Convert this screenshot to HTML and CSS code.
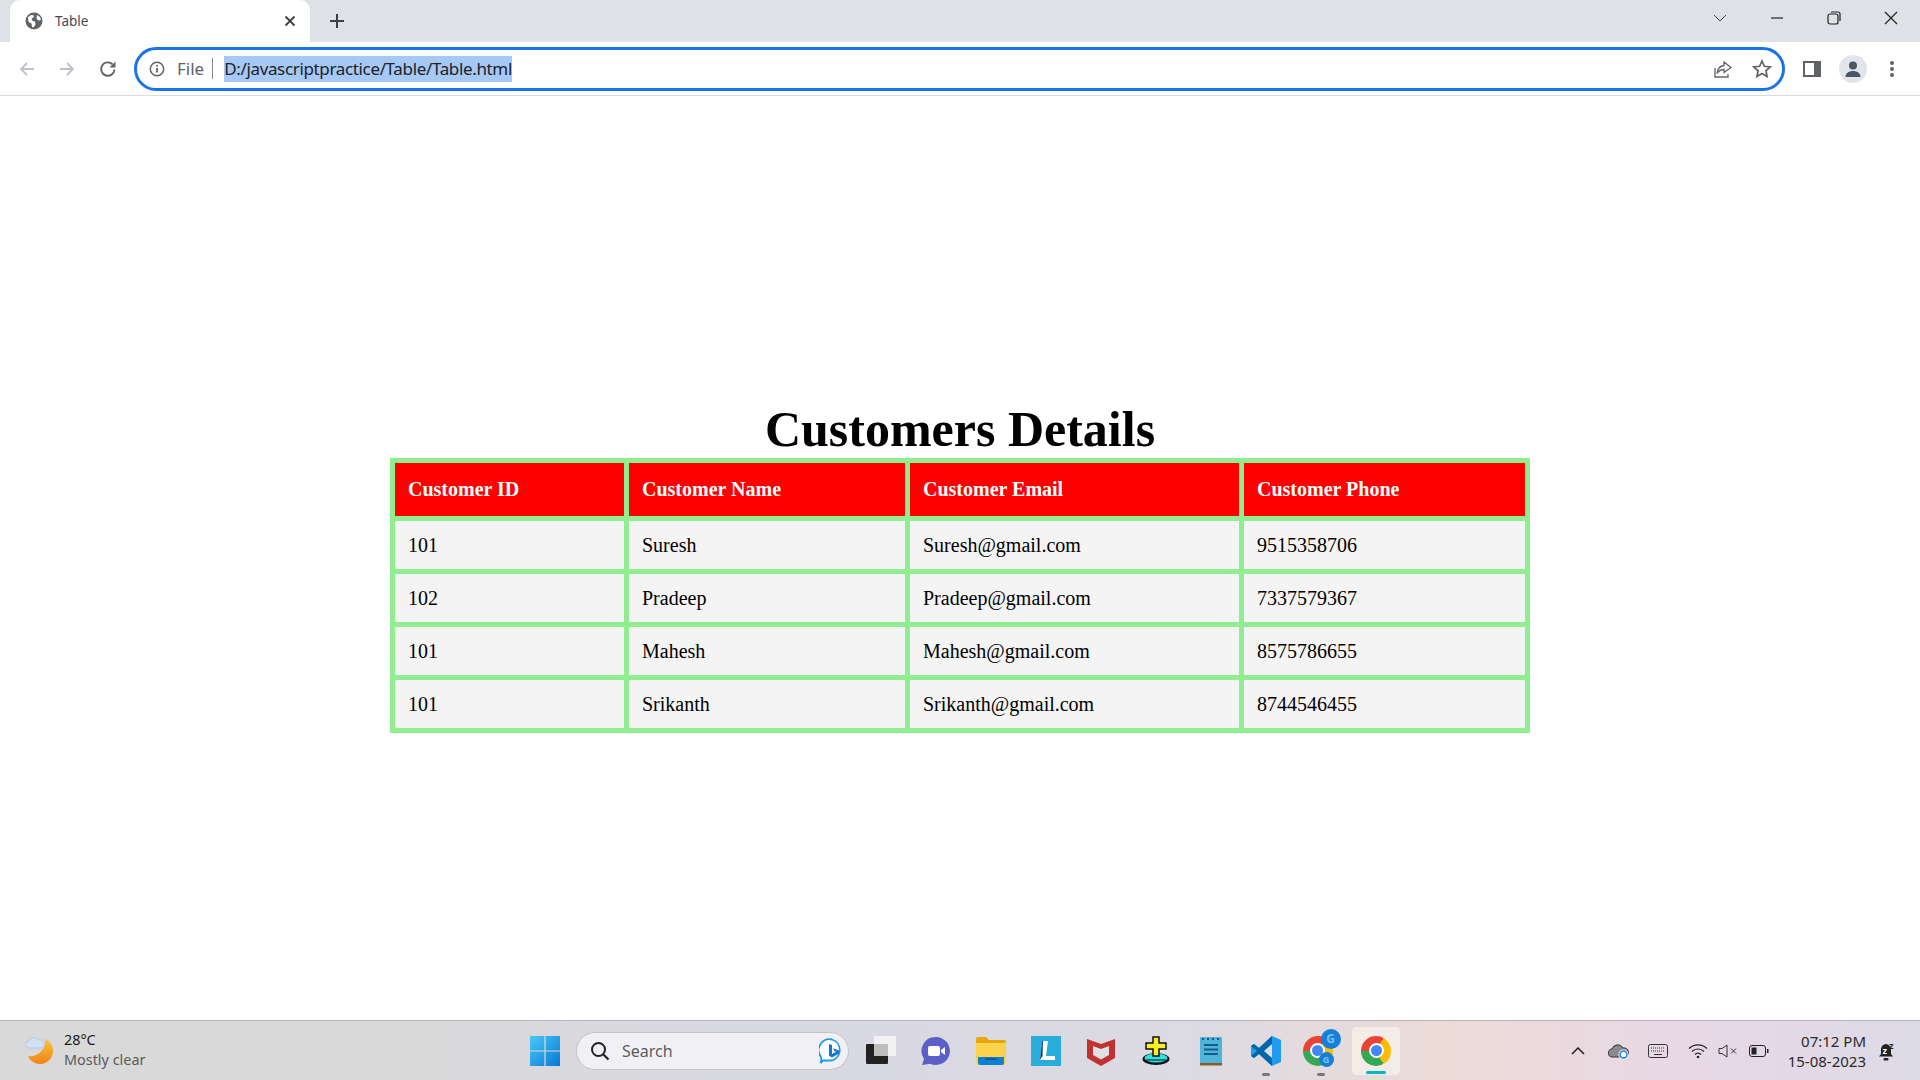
FILE: index.html

```html
<!DOCTYPE html>
<html lang="en">
<head>
  <meta charset="UTF-8">
  <title>Table</title>
  <link rel="stylesheet" href="styles.css">
</head>
<body>
  <div class="tabstrip">
    <div class="tab">
      <svg class="tab-globe" width="18" height="18" viewBox="0 0 18 18"><circle cx="9" cy="9" r="8.5" fill="#5f6368"/><path d="M3 5l3-2 3 .5-.5 2-2 1 1 2.5 2.5.5.5 3-2 3-1.500-.5-.5-3.500-3-1.500zM12 3l3 2 1 3-3 .5-1.500-2.500z" fill="#fff"/></svg>
      <span class="tab-title">Table</span>
      <svg class="tab-close" width="12" height="12" viewBox="0 0 12 12"><path d="M1.500 1.500l9 9M10.500 1.500l-9 9" stroke="#3c4043" stroke-width="1.800"/></svg>
    </div>
    <svg class="new-tab" width="16" height="16" viewBox="0 0 16 16"><path d="M8 1v14M1 8h14" stroke="#3c4043" stroke-width="2"/></svg>
    <div class="window-btns">
      <svg width="14" height="14" viewBox="0 0 14 14"><path d="M1 4l6 6 6-6" fill="none" stroke="#3c4043"/></svg>
      <svg width="14" height="14" viewBox="0 0 14 14"><path d="M1 7h12" stroke="#222" stroke-width="1.200"/></svg>
      <svg width="14" height="14" viewBox="0 0 14 14"><rect x="1" y="3" width="10" height="10" rx="2" fill="none" stroke="#222" stroke-width="1.200"/><path d="M4 1h7a2 2 0 0 1 2 2v7" fill="none" stroke="#222" stroke-width="1.200"/></svg>
      <svg width="14" height="14" viewBox="0 0 14 14"><path d="M1 1l12 12M13 1L1 13" stroke="#222" stroke-width="1.200"/></svg>
    </div>
  </div>

  <div class="toolbar">
    <svg class="nav-icon" width="18" height="18" viewBox="0 0 18 18"><path d="M16 9H3M9 3L3 9l6 6" fill="none" stroke="#bdc1c6" stroke-width="1.800"/></svg>
    <svg class="nav-icon" width="18" height="18" viewBox="0 0 18 18"><path d="M2 9h13M9 3l6 6-6 6" fill="none" stroke="#bdc1c6" stroke-width="1.800"/></svg>
    <svg class="nav-icon" width="18" height="18" viewBox="0 0 18 18"><path d="M15.500 9.500A6.700 6.700 0 1 1 13.600 4.400" fill="none" stroke="#5f6368" stroke-width="1.900"/><path d="M16.500 1.500v6h-6z" fill="#5f6368"/></svg>
    <div class="omnibox">
      <svg class="info-icon" width="16" height="16" viewBox="0 0 16 16"><circle cx="8" cy="8" r="6.700" fill="none" stroke="#5f6368" stroke-width="1.500"/><path d="M8 7v4.500" stroke="#5f6368" stroke-width="1.800"/><circle cx="8" cy="4.800" r="1" fill="#5f6368"/></svg>
      <span class="scheme">File</span>
      <span class="divider"></span>
      <span class="url">D:/javascriptpractice/Table/Table.html</span>
      <svg class="share-icon" width="20" height="20" viewBox="0 0 20 20"><path d="M2 9v9h13v-3" fill="none" stroke="#5f6368" stroke-width="1.300"/><path d="M11 3l7 5.500-7 5v-3c-3 0-5 1-7 4 .5-4.500 3-7.500 7-8z" fill="none" stroke="#5f6368" stroke-width="1.300"/></svg>
      <svg class="star-icon" width="20" height="20" viewBox="0 0 20 20"><path d="M10 2l2.400 5.300 5.800.6-4.300 3.900 1.200 5.700L10 14.600l-5.100 2.900 1.200-5.700L1.800 7.900l5.800-.6z" fill="none" stroke="#5f6368" stroke-width="1.700"/></svg>
    </div>
    <svg class="panel-icon" width="18" height="16" viewBox="0 0 18 16"><path d="M0 0h18v16H0zM2 2v12h9V2z" fill="#5f6368" fill-rule="evenodd"/></svg>
    <div class="avatar">
      <svg width="18" height="18" viewBox="0 0 18 18"><circle cx="9" cy="5.500" r="4" fill="#4a5568"/><path d="M1.500 17c0-4 3.500-6 7.500-6s7.500 2 7.500 6z" fill="#4a5568"/></svg>
    </div>
    <svg class="menu-icon" width="6" height="18" viewBox="0 0 6 18"><circle cx="3" cy="3" r="2" fill="#5f6368"/><circle cx="3" cy="9" r="2" fill="#5f6368"/><circle cx="3" cy="15" r="2" fill="#5f6368"/></svg>
  </div>

  <main class="page">
    <h1>Customers Details</h1>
    <table class="customers">
      <colgroup>
        <col class="col-id"><col class="col-name"><col class="col-email"><col class="col-phone">
      </colgroup>
      <thead>
        <tr><th>Customer ID</th><th>Customer Name</th><th>Customer Email</th><th>Customer Phone</th></tr>
      </thead>
      <tbody>
        <tr><td>101</td><td>Suresh</td><td>Suresh@gmail.com</td><td>9515358706</td></tr>
        <tr><td>102</td><td>Pradeep</td><td>Pradeep@gmail.com</td><td>7337579367</td></tr>
        <tr><td>101</td><td>Mahesh</td><td>Mahesh@gmail.com</td><td>8575786655</td></tr>
        <tr><td>101</td><td>Srikanth</td><td>Srikanth@gmail.com</td><td>8744546455</td></tr>
      </tbody>
    </table>
  </main>

  <footer class="taskbar">
    <div class="weather">
      <svg width="30" height="30" viewBox="0 0 30 30">
        <defs><linearGradient id="moon" x1="0" y1="0" x2="0" y2="1"><stop offset="0" stop-color="#f8c33a"/><stop offset="1" stop-color="#f08418"/></linearGradient></defs>
        <path d="M20 4A13 13 0 1 1 3 21A15 15 0 0 0 20 4z" fill="url(#moon)"/>
        <path d="M4 13a3.500 3.500 0 0 1 0-7A6 6 0 0 1 14 5a4 4 0 0 1 2 8z" fill="#d4e0f6" stroke="#b7c9ea"/>
      </svg>
      <div class="weather-text">
        <div class="temp">28°C</div>
        <div class="cond">Mostly clear</div>
      </div>
    </div>

    <div class="slot">
      <svg width="30" height="30" viewBox="0 0 30 30">
        <defs><linearGradient id="win" x1="0" y1="0" x2="1" y2="1"><stop offset="0" stop-color="#4cc8f8"/><stop offset="1" stop-color="#0578d4"/></linearGradient></defs>
        <path d="M0 0h14.400v14.400H0zM15.600 0H30v14.400H15.600zM0 15.600h14.400V30H0zM15.600 15.600H30V30H15.600z" fill="url(#win)"/>
      </svg>
    </div>

    <div class="searchbox">
      <svg width="20" height="20" viewBox="0 0 20 20"><circle cx="8.500" cy="8.500" r="6.500" fill="none" stroke="#222" stroke-width="2"/><path d="M13.500 13.500l5 5" stroke="#222" stroke-width="2.200"/></svg>
      <span class="search-label">Search</span>
      <svg class="bing" width="26" height="26" viewBox="0 0 26 26">
        <path d="M13 1.500a11 11 0 0 1 0 21H4l-2.500 2.500c1-2 1-3 .5-6A11 11 0 0 1 13 1.500z" fill="#fff" stroke="#1c9be6" stroke-width="1.800"/>
        <path d="M10 6l3 1v9l4-2.300-2-1-1-2.500 6 2.300v3l-7 4-3-1.700z" fill="#1673d6"/>
      </svg>
    </div>

    <div class="slot">
      <svg width="30" height="30" viewBox="0 0 30 30"><rect x="8" y="0" width="22" height="20" rx="1" fill="#f2f2f4"/><rect x="0" y="8" width="22" height="20" rx="1" fill="#222"/><rect x="8" y="8" width="14" height="12" fill="#bdbdbd"/></svg>
    </div>
    <div class="slot">
      <svg width="30" height="30" viewBox="0 0 30 30"><path d="M15 1a14 14 0 1 1-6 26.700L1 29l2-6A14 14 0 0 1 15 1z" fill="#5b5fc7"/><rect x="7" y="10" width="12" height="10" rx="2" fill="#fff"/><path d="M20 14l4-3v8l-4-3z" fill="#fff"/></svg>
    </div>
    <div class="slot">
      <svg width="30" height="28" viewBox="0 0 30 28"><path d="M0 2a2 2 0 0 1 2-2h8l3 3h15a2 2 0 0 1 2 2v3H0z" fill="#e8a70c"/><path d="M0 6h30v20a2 2 0 0 1-2 2H2a2 2 0 0 1-2-2z" fill="#fbd249"/><path d="M2 20h26v6a2 2 0 0 1-2 2H4a2 2 0 0 1-2-2z" fill="#0f7fd0"/><rect x="9" y="21" width="12" height="2" rx="1" fill="#0a5fa8"/></svg>
    </div>
    <div class="slot">
      <svg width="30" height="30" viewBox="0 0 30 30"><rect width="30" height="30" fill="#29aedb"/><path d="M9 24L11 5h6l-2 15h9v4z" fill="#fff"/><path d="M9 24L11 5l1 0-.5 15z" fill="#123a8a"/></svg>
    </div>
    <div class="slot">
      <svg width="28" height="30" viewBox="0 0 28 30"><path d="M0 3l14 5 14-5v19l-14 8-14-8z" fill="#c0312f"/><path d="M6 10l8 3 8-3v9l-8 4.500L6 19z" fill="#e0dfe6"/></svg>
    </div>
    <div class="slot">
      <svg width="30" height="30" viewBox="0 0 30 30"><ellipse cx="15" cy="23" rx="13.500" ry="6" fill="#111"/><ellipse cx="15" cy="22" rx="11.500" ry="4.500" fill="#2de0e0"/><path d="M5 24h20" stroke="#111"/><path d="M12 1h6v6h7v6h-7v7h-6v-7H5V7h7z" fill="#f8f020" stroke="#111" stroke-width="1.500"/></svg>
    </div>
    <div class="slot">
      <svg width="22" height="30" viewBox="0 0 22 30"><rect y="1" width="22" height="27" rx="1" fill="#4fb4d8"/><rect y="27" width="22" height="2.500" fill="#8a5a2b"/><path d="M4 9h14M4 13.500h14M4 18h14" stroke="#0e5f88" stroke-width="1.800"/><path d="M3 2v2M8 2v2M13 2v2M18 2v2" stroke="#0e5f88" stroke-width="2"/></svg>
    </div>
    <div class="slot running">
      <svg width="30" height="30" viewBox="0 0 30 30"><path d="M21 0l9 4v22l-9 4L8 18l-5 4-3-2V10l3-2 5 4z" fill="#1f9cf0"/><path d="M21 0v30L8 18l-5 4-3-2 6-5-6-5 3-2 5 4z" fill="#0065a9"/><path d="M21 8v14l-8-7z" fill="#dcdce6"/></svg>
    </div>
    <div class="slot running">
      <div class="chrome-wrap">
        <div class="chrome-logo"><span class="chrome-core"></span></div>
        <span class="g-badge g-big">G</span>
        <span class="g-badge g-small">G</span>
      </div>
    </div>
    <div class="slot active">
      <div class="chrome-logo"><span class="chrome-core"></span></div>
    </div>

    <div class="tray">
      <svg class="tray-chevron" width="14" height="8" viewBox="0 0 14 8"><path d="M1 7l6-6 6 6" fill="none" stroke="#222" stroke-width="1.500"/></svg>
      <svg class="tray-cloud" width="22" height="18" viewBox="0 0 22 18"><path d="M5 15a4 4 0 0 1-1-8 6 6 0 0 1 11-1 4.500 4.500 0 0 1 2 9z" fill="#8a8a8e" stroke="#333"/><circle cx="15.500" cy="12.500" r="5" fill="#fff"/><circle cx="15.500" cy="12.500" r="3.500" fill="none" stroke="#1a7fd8" stroke-width="1.500"/></svg>
      <svg class="tray-keys" width="20" height="14" viewBox="0 0 20 14"><rect x=".5" y=".5" width="19" height="13" rx="2" fill="none" stroke="#333"/><path d="M3 4h14M3 7h14" stroke="#333" stroke-dasharray="1 1"/><path d="M6 10.500h8" stroke="#333"/></svg>
      <svg class="tray-wifi" width="20" height="16" viewBox="0 0 20 16"><path d="M1 5.500a13 13 0 0 1 18 0M4 8.500a8.500 8.500 0 0 1 12 0M7 11.500a4 4 0 0 1 6 0" fill="none" stroke="#222" stroke-width="1.200"/><circle cx="10" cy="14" r="1.300" fill="#222"/></svg>
      <svg class="tray-sound" width="20" height="14" viewBox="0 0 20 14"><path d="M1 4.500h3L9 1v12L4 9.500H1z" fill="none" stroke="#333"/><path d="M13 4.500l5 5M18 4.500l-5 5" stroke="#333"/></svg>
      <svg class="tray-battery" width="20" height="12" viewBox="0 0 20 12"><rect x=".5" y=".5" width="16" height="11" rx="2.500" fill="none" stroke="#222"/><rect x="2.500" y="2.500" width="5" height="7" fill="#222"/><path d="M18 4h1.500v4H18z" fill="#222"/></svg>
      <div class="clock">
        <div>07:12 PM</div>
        <div>15-08-2023</div>
      </div>
      <svg class="tray-bell" width="18" height="22" viewBox="0 0 18 22"><path d="M8 4C4.500 4.500 3 7 3 10v4l-2 2.500h14L13 14v-4c0-3-2-5.500-5-6z" fill="#222"/><rect x="5.500" y="18" width="5" height="2.500" rx="1" fill="#222"/><text class="bell-small" x="4.500" y="14">z</text><text class="bell-big" x="11" y="9">z</text></svg>
    </div>
  </footer>
</body>
</html>
```

FILE: styles.css

```css
* {
  box-sizing: border-box;
}
html, body {
  height: 100%;
}
body {
  margin: 0;
  display: flex;
  flex-direction: column;
  height: 1080px;
  overflow: hidden;
  background: #fff;
  font-family: "Noto Sans", "Open Sans", sans-serif;
}
svg {
  display: block;
  flex-shrink: 0;
}

/* browser tabs */
.tabstrip {
  height: 42px;
  background: #dee1e6;
  display: flex;
  align-items: flex-end;
  padding-left: 10px;
}
.tab {
  width: 300px;
  height: 42px;
  background: #fff;
  border-radius: 10px 10px 0 0;
  display: flex;
  align-items: center;
  padding: 0 14px 0 15px;
}
.tab-title {
  margin-left: 12px;
  font-size: 13.500px;
  color: #45494e;
  flex: 1;
}
.new-tab {
  margin: 0 0 13px 19px;
}
.window-btns {
  margin-left: auto;
  align-self: stretch;
  display: flex;
  align-items: center;
  gap: 43px;
  padding: 0 22px 6px 0;
}

/* address bar */
.toolbar {
  height: 54px;
  background: #fff;
  border-bottom: 1px solid #dadce0;
  display: flex;
  align-items: center;
  padding: 0 25px 0 18px;
}
.nav-icon {
  margin-right: 22px;
}
.nav-icon:nth-child(2) {
  margin-right: 23px;
}
.nav-icon:nth-child(3) {
  margin-right: 17px;
}
.omnibox {
  width: 1651px;
  height: 44px;
  border: 3px solid #1a73e8;
  border-radius: 22px;
  display: flex;
  align-items: center;
  padding: 0 10px 0 12px;
  font-size: 17px;
}
.scheme {
  margin-left: 12px;
  color: #5f6368;
}
.divider {
  width: 1px;
  height: 21px;
  background: #80868b;
  margin: 0 11px 0 8px;
}
.url {
  background: #a5c8f5;
  color: #202124;
  line-height: 26px;
  letter-spacing: -0.350px;
}
.share-icon {
  margin-left: auto;
}
.star-icon {
  margin-left: 19px;
}
.panel-icon {
  margin-left: 18px;
}
.avatar {
  width: 28px;
  height: 28px;
  border-radius: 50%;
  background: #e2e4e9;
  margin-left: 18px;
  display: flex;
  align-items: center;
  justify-content: center;
}
.menu-icon {
  margin-left: 22px;
}

/* page content */
.page {
  flex: 1;
  padding-top: 304px;
  font-family: "Liberation Serif", "Times New Roman", serif;
  color: #000;
}
h1 {
  margin: 0;
  text-align: center;
  font-size: 50px;
  line-height: 58px;
}
.customers {
  width: 1140px;
  margin: 0 auto;
  table-layout: fixed;
  border-collapse: separate;
  border-spacing: 5px;
  background: #90ee90;
  font-size: 20px;
}
.col-id { width: 229px; }
.col-name { width: 276px; }
.col-email { width: 329px; }
.col-phone { width: 281px; }
.customers th, .customers td {
  padding: 0 13px;
  text-align: left;
}
.customers th {
  height: 53px;
  background: #f00;
  color: #fff;
}
.customers td {
  height: 48px;
  background: #f4f4f4;
}

/* windows taskbar */
.taskbar {
  height: 60px;
  border-top: 1px solid #b4b4b8;
  background: linear-gradient(90deg, #d9d9d9 0%, #d9d9d9 18%, #d9d9e3 45%, #dcdae2 62%, #ecdcd8 75%, #e8d8e6 88%, #dcdae6 100%);
  display: flex;
  align-items: center;
}
.weather {
  width: 517px;
  display: flex;
  align-items: center;
  padding-left: 25px;
  gap: 9px;
  font-size: 14.400px;
  line-height: 20px;
  margin-top: -2px;
}
.temp {
  color: #1b1b1b;
}
.cond {
  color: #5a5a5a;
}
.slot {
  width: 55px;
  height: 48px;
  display: flex;
  align-items: center;
  justify-content: center;
  position: relative;
}
.running::after, .active::after {
  content: "";
  position: absolute;
  bottom: -1px;
  left: 50%;
  width: 8px;
  height: 3px;
  margin-left: -4px;
  border-radius: 2px;
  background: #77777c;
}
.active {
  background: #f5ece8;
  border-radius: 5px;
  width: 48px;
  margin-left: 4px;
}
.active::after {
  width: 20px;
  margin-left: -10px;
  bottom: 1px;
  background: #00b7c3;
}
.searchbox {
  width: 273px;
  height: 38px;
  margin: 0 4px;
  border-radius: 19px;
  border: 1px solid #c4c4c8;
  background: #f1f1f5;
  display: flex;
  align-items: center;
  padding: 0 3px 0 13px;
  font-size: 16px;
  color: #5c5c5c;
}
.search-label {
  margin-left: 12px;
}
.bing {
  margin-left: auto;
}
.chrome-logo {
  width: 30px;
  height: 30px;
  border-radius: 50%;
  background: conic-gradient(from 30deg, #fbbc04 0 120deg, #34a853 120deg 240deg, #ea4335 240deg 360deg);
  display: flex;
  align-items: center;
  justify-content: center;
}
.chrome-core {
  box-sizing: content-box;
  width: 11px;
  height: 11px;
  border-radius: 50%;
  background: #4285f4;
  border: 2px solid #fff;
}
.chrome-wrap {
  position: relative;
  width: 30px;
  height: 30px;
  margin-right: 6px;
}
.g-badge {
  position: absolute;
  border-radius: 50%;
  background: #1480d8;
  color: #7cc0f2;
  font-weight: 700;
  display: flex;
  align-items: center;
  justify-content: center;
}
.g-big {
  width: 20px;
  height: 20px;
  right: -8px;
  top: -7px;
  font-size: 12px;
}
.g-small {
  width: 15px;
  height: 15px;
  right: -1px;
  bottom: -1px;
  font-size: 9px;
}
.tray {
  margin-left: 171px;
  display: flex;
  align-items: center;
}
.tray-cloud { margin-left: 23px; }
.tray-keys { margin-left: 18px; }
.tray-wifi { margin-left: 20px; }
.tray-sound { margin-left: 10px; }
.tray-battery { margin-left: 11px; }
.clock {
  width: 97px;
  text-align: right;
  font-size: 15px;
  line-height: 20px;
  color: #2b2b2b;
}
.tray-bell {
  margin-left: 12px;
}
.bell-small {
  font-size: 9px;
  font-weight: 700;
  fill: #fff;
}
.bell-big {
  font-size: 9px;
  font-weight: 700;
  fill: #222;
}
```
